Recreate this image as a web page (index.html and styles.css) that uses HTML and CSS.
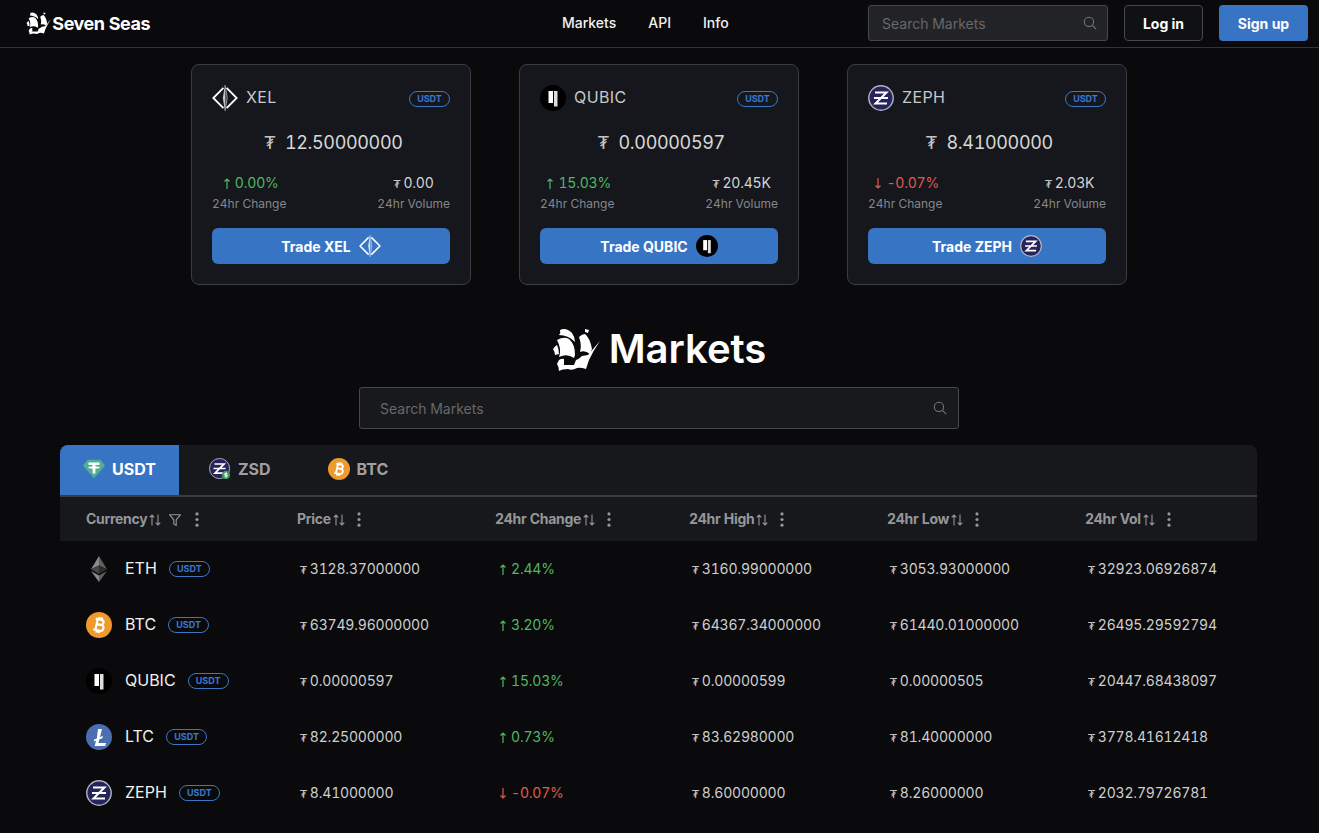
FILE: index.html
```html
<!DOCTYPE html>
<html lang="en">
<head>
  <meta charset="UTF-8">
  <title>Seven Seas - Markets</title>
  <link rel="stylesheet" href="styles.css">
</head>
<body>
  <svg class="sprite" xmlns="http://www.w3.org/2000/svg">
    <symbol id="i-ship" viewBox="0 0 48 44">
      <g fill="#fff">
        <path d="M8 3Q14 0 20 6Q23 10 23 15Q16 8 7 8Q9 6 8 3z"/>
        <path d="M5 13Q12 9 17 12Q23 17 23 28L22 31Q15 26 7 30Q10 22 5 13z"/>
        <path d="M1 22Q3 19 5 18Q7 22 7 27L3 28Q3 25 1 22z"/>
        <path d="M27 10Q30 7 33 7Q38 11 40 22L38 27Q33 23 28 25Q30 18 27 10z"/>
        <path d="M33 2L37 3L36 6L33 5z"/>
        <path d="M7 33Q10 31 12 32L12 38L5 37z"/>
        <path d="M5 37Q9 36 12 38L22 38L24 33Q27 32 30 29L36 28L48 14Q41 24 37 33L34 42Q28 40 25 41Q20 44 16 42Q10 42 7 44Q7 40 5 37z"/>
      </g>
    </symbol>
    <symbol id="i-xel" viewBox="0 0 26 26">
      <path fill="none" stroke="#fff" stroke-width="1.8" d="M11.4 2.8L1.3 13l10.1 10.2M14.6 2.8L24.700 13 14.600 23.200"/>
      <path fill="#fff" opacity=".75" d="M13 0l.5 13-.5 13-2.200-13z"/>
      <path fill="none" stroke="#fff" stroke-width=".6" d="M13 0l2.200 13L13 26"/>
    </symbol>
    <symbol id="i-qubic" viewBox="0 0 26 26">
      <circle cx="13" cy="13" r="13" fill="#000"/>
      <path fill="#fff" d="M8.500 6H13v12H8.500z"/>
      <path fill="#ddd" d="M14 6h3.500v15.500H14z"/>
    </symbol>
    <symbol id="i-zeph" viewBox="0 0 26 26">
      <circle cx="13" cy="13" r="12.200" fill="#25255c" stroke="#b4b4c6" stroke-width="1.400"/>
      <path fill="none" stroke="#fff" stroke-width="2" d="M7 7.500h11.500L7.500 18.500H19M6 13h14"/>
    </symbol>
    <symbol id="i-eth" viewBox="0 0 26 26">
      <path fill="#8a8a8a" d="M13 0v9.500l-8 3.800z"/>
      <path fill="#5e5e5e" d="M13 0v9.500l8 3.800z"/>
      <path fill="#454545" d="M5 13.300l8-3.800v8.500z"/>
      <path fill="#2d2d2d" d="M21 13.300l-8-3.800v8.500z"/>
      <path fill="#8a8a8a" d="M5 15l8 11v-6.500z"/>
      <path fill="#5e5e5e" d="M21 15l-8 11v-6.500z"/>
    </symbol>
    <symbol id="i-btc" viewBox="0 0 26 26">
      <circle cx="13" cy="13" r="13" fill="#ef9a2c"/>
      <g transform="rotate(12 13 13)">
        <path fill="none" stroke="#fff" stroke-width="2.200" d="M8.500 7.500h6c3.200 0 3.200 5 0 5H10.500m0 0h5c3.400 0 3.400 6-.5 6H8.500M10.500 6.500v13M12 7.500V5m2.500 2.500V5M12 18.500V21m2.500-2.500V21"/>
      </g>
    </symbol>
    <symbol id="i-ltc" viewBox="0 0 26 26">
      <circle cx="13" cy="13" r="13" fill="#4a6eb0"/>
      <path fill="#fff" d="M12 5h4l-2 8 3-1-.6 2.300-3 1-1 3.700H20l-.8 3H8.700l1.400-5.500-2.400.9.500-2 2.600-1z"/>
    </symbol>
    <symbol id="i-usdt" viewBox="0 0 24 20">
      <path fill="#53ae94" d="M5 0h14l5 6.500L12 20 0 6.500z"/>
      <path fill="#fff" d="M6 3h12v2.600h-4.500v1.500c2.800.2 4.800.7 4.800 1.300s-2 1.100-4.800 1.300V15h-3V9.700C7.700 9.500 5.700 9 5.700 8.400s2-1.100 4.800-1.300V5.600H6z"/>
    </symbol>
    <symbol id="i-zsd" viewBox="0 0 24 24">
      <circle cx="11.500" cy="11.500" r="11" fill="#25255c" stroke="#b4b4c6" stroke-width="1"/>
      <path fill="none" stroke="#fff" stroke-width="1.800" d="M6 6.500h10.500L6.500 16.500H17M5 11.500h13"/>
      <circle cx="18.500" cy="18.500" r="4.500" fill="#3f9c5f"/>
      <path fill="none" stroke="#fff" stroke-width="1" d="M18.500 15.500v6M20 17h-2.500c-.8 0-.8 1.500 0 1.500h2c.8 0 .8 1.500 0 1.500H17"/>
    </symbol>
    <symbol id="i-search" viewBox="0 0 16 16">
      <circle cx="6.800" cy="6.800" r="5.300" fill="none" stroke="currentColor" stroke-width="1.200"/>
      <path stroke="currentColor" stroke-width="1.200" d="M10.800 10.800l4.200 4.200"/>
    </symbol>
    <symbol id="i-sort" viewBox="0 0 12 12">
      <path fill="none" stroke="currentColor" stroke-width="1.100" d="M3 11.500V1M.7 3.300L3 1l2.300 2.300M9 .5V11M6.700 8.700L9 11l2.300-2.300"/>
    </symbol>
    <symbol id="i-filter" viewBox="0 0 12 12">
      <path fill="none" stroke="currentColor" stroke-width="1.100" d="M.6.800h10.800L7.200 5.800v5.600L4.800 10V5.800z"/>
    </symbol>
    <symbol id="i-dots" viewBox="0 0 4 16">
      <circle cx="2" cy="2" r="1.700" fill="currentColor"/>
      <circle cx="2" cy="8" r="1.700" fill="currentColor"/>
      <circle cx="2" cy="14" r="1.700" fill="currentColor"/>
    </symbol>
    <symbol id="i-up" viewBox="0 0 6 11">
      <path fill="none" stroke="currentColor" stroke-width="1.200" d="M3 11V1M.5 3.500L3 1l2.500 2.500"/>
    </symbol>
    <symbol id="i-down" viewBox="0 0 6 11">
      <path fill="none" stroke="currentColor" stroke-width="1.200" d="M3 0v10M.5 7.500L3 10l2.500-2.500"/>
    </symbol>
  </svg>

  <header class="topbar">
    <a class="brand" href="#"><svg class="brand-icon"><use href="#i-ship"/></svg>Seven Seas</a>
    <nav class="nav">
      <a href="#">Markets</a>
      <a href="#">API</a>
      <a href="#">Info</a>
    </nav>
    <div class="topbar-right">
      <div class="search search-small">
        <span>Search Markets</span>
        <svg class="search-icon"><use href="#i-search"/></svg>
      </div>
      <button class="btn-outline">Log in</button>
      <button class="btn-primary">Sign up</button>
    </div>
  </header>

  <main>
    <section class="cards">
      <article class="card">
        <div class="card-head">
          <svg class="coin"><use href="#i-xel"/></svg>
          <span class="card-name">XEL</span>
          <span class="badge">USDT</span>
        </div>
        <div class="card-price"><span class="tug">₮</span>12.50000000</div>
        <div class="card-stats">
          <div class="stat"><div class="stat-val up"><svg class="arrow"><use href="#i-up"/></svg>0.00%</div><div class="stat-label">24hr Change</div></div>
          <div class="stat"><div class="stat-val"><span class="tug">₮</span>0.00</div><div class="stat-label">24hr Volume</div></div>
        </div>
        <button class="trade">Trade XEL <svg class="coin-small"><use href="#i-xel"/></svg></button>
      </article>
      <article class="card">
        <div class="card-head">
          <svg class="coin"><use href="#i-qubic"/></svg>
          <span class="card-name">QUBIC</span>
          <span class="badge">USDT</span>
        </div>
        <div class="card-price"><span class="tug">₮</span>0.00000597</div>
        <div class="card-stats">
          <div class="stat"><div class="stat-val up"><svg class="arrow"><use href="#i-up"/></svg>15.03%</div><div class="stat-label">24hr Change</div></div>
          <div class="stat"><div class="stat-val"><span class="tug">₮</span>20.45K</div><div class="stat-label">24hr Volume</div></div>
        </div>
        <button class="trade">Trade QUBIC <svg class="coin-small"><use href="#i-qubic"/></svg></button>
      </article>
      <article class="card">
        <div class="card-head">
          <svg class="coin"><use href="#i-zeph"/></svg>
          <span class="card-name">ZEPH</span>
          <span class="badge">USDT</span>
        </div>
        <div class="card-price"><span class="tug">₮</span>8.41000000</div>
        <div class="card-stats">
          <div class="stat"><div class="stat-val down"><svg class="arrow"><use href="#i-down"/></svg>-0.07%</div><div class="stat-label">24hr Change</div></div>
          <div class="stat"><div class="stat-val"><span class="tug">₮</span>2.03K</div><div class="stat-label">24hr Volume</div></div>
        </div>
        <button class="trade">Trade ZEPH <svg class="coin-small"><use href="#i-zeph"/></svg></button>
      </article>
    </section>

    <h1 class="title"><svg class="title-icon"><use href="#i-ship"/></svg>Markets</h1>

    <div class="search search-large">
      <span>Search Markets</span>
      <svg class="search-icon"><use href="#i-search"/></svg>
    </div>

    <section class="panel">
      <div class="tabs">
        <a class="tab tab-active" href="#"><svg class="tab-icon"><use href="#i-usdt"/></svg>USDT</a>
        <a class="tab" href="#"><svg class="tab-icon"><use href="#i-zsd"/></svg>ZSD</a>
        <a class="tab" href="#"><svg class="tab-icon"><use href="#i-btc"/></svg>BTC</a>
      </div>
      <table class="markets">
        <colgroup>
          <col class="col-first">
          <col class="col-price">
          <col class="col-change">
          <col class="col-rest">
          <col class="col-rest">
          <col class="col-rest">
        </colgroup>
        <thead>
          <tr>
            <th>Currency<svg class="sort"><use href="#i-sort"/></svg><svg class="filter"><use href="#i-filter"/></svg><svg class="dots"><use href="#i-dots"/></svg></th>
            <th>Price<svg class="sort"><use href="#i-sort"/></svg><svg class="dots"><use href="#i-dots"/></svg></th>
            <th>24hr Change<svg class="sort"><use href="#i-sort"/></svg><svg class="dots"><use href="#i-dots"/></svg></th>
            <th>24hr High<svg class="sort"><use href="#i-sort"/></svg><svg class="dots"><use href="#i-dots"/></svg></th>
            <th>24hr Low<svg class="sort"><use href="#i-sort"/></svg><svg class="dots"><use href="#i-dots"/></svg></th>
            <th>24hr Vol<svg class="sort"><use href="#i-sort"/></svg><svg class="dots"><use href="#i-dots"/></svg></th>
          </tr>
        </thead>
        <tbody>
          <tr>
            <td><div class="pair"><svg class="coin"><use href="#i-eth"/></svg><span>ETH</span><span class="badge">USDT</span></div></td>
            <td><span class="tug">₮</span>3128.37000000</td>
            <td class="up"><svg class="arrow"><use href="#i-up"/></svg>2.44%</td>
            <td><span class="tug">₮</span>3160.99000000</td>
            <td><span class="tug">₮</span>3053.93000000</td>
            <td><span class="tug">₮</span>32923.06926874</td>
          </tr>
          <tr>
            <td><div class="pair"><svg class="coin"><use href="#i-btc"/></svg><span>BTC</span><span class="badge">USDT</span></div></td>
            <td><span class="tug">₮</span>63749.96000000</td>
            <td class="up"><svg class="arrow"><use href="#i-up"/></svg>3.20%</td>
            <td><span class="tug">₮</span>64367.34000000</td>
            <td><span class="tug">₮</span>61440.01000000</td>
            <td><span class="tug">₮</span>26495.29592794</td>
          </tr>
          <tr>
            <td><div class="pair"><svg class="coin"><use href="#i-qubic"/></svg><span>QUBIC</span><span class="badge">USDT</span></div></td>
            <td><span class="tug">₮</span>0.00000597</td>
            <td class="up"><svg class="arrow"><use href="#i-up"/></svg>15.03%</td>
            <td><span class="tug">₮</span>0.00000599</td>
            <td><span class="tug">₮</span>0.00000505</td>
            <td><span class="tug">₮</span>20447.68438097</td>
          </tr>
          <tr>
            <td><div class="pair"><svg class="coin"><use href="#i-ltc"/></svg><span>LTC</span><span class="badge">USDT</span></div></td>
            <td><span class="tug">₮</span>82.25000000</td>
            <td class="up"><svg class="arrow"><use href="#i-up"/></svg>0.73%</td>
            <td><span class="tug">₮</span>83.62980000</td>
            <td><span class="tug">₮</span>81.40000000</td>
            <td><span class="tug">₮</span>3778.41612418</td>
          </tr>
          <tr>
            <td><div class="pair"><svg class="coin"><use href="#i-zeph"/></svg><span>ZEPH</span><span class="badge">USDT</span></div></td>
            <td><span class="tug">₮</span>8.41000000</td>
            <td class="down"><svg class="arrow"><use href="#i-down"/></svg>-0.07%</td>
            <td><span class="tug">₮</span>8.60000000</td>
            <td><span class="tug">₮</span>8.26000000</td>
            <td><span class="tug">₮</span>2032.79726781</td>
          </tr>
        </tbody>
      </table>
    </section>
  </main>
</body>
</html>
```

FILE: styles.css
```css
* {
  box-sizing: border-box;
}
body {
  margin: 0;
  font-family: Inter, "Noto Sans", sans-serif;
  font-variant-numeric: tabular-nums;
  background: #0a0a0c;
  color: #d4d4d4;
}
a {
  color: inherit;
  text-decoration: none;
}
button {
  font-family: inherit;
  cursor: pointer;
}
.sprite {
  display: none;
}
main {
  padding-right: 1px;
}

/* top bar */
.topbar {
  display: flex;
  align-items: center;
  height: 48px;
  padding: 0 11px 1px 26px;
  border-bottom: 1px solid #333436;
}
.brand {
  display: flex;
  align-items: center;
  width: 124px;
  font-size: 18px;
  font-weight: 700;
  letter-spacing: -0.5px;
  white-space: nowrap;
  color: #fff;
}
.brand-icon {
  width: 26px;
  height: 24px;
  margin-right: 1px;
}
.nav {
  display: flex;
  gap: 32px;
  margin-left: 412px;
  padding-bottom: 2px;
  font-size: 14px;
  font-weight: 500;
  color: #f2f2f2;
}
.topbar-right {
  display: flex;
  gap: 16px;
  margin-left: auto;
}
.search {
  display: flex;
  align-items: center;
  justify-content: space-between;
  border: 1px solid #45474a;
  border-radius: 3px;
  color: #66686b;
  font-size: 14px;
}
.search-small {
  width: 240px;
  height: 36px;
  padding: 0 10px 0 13px;
  background: #212327;
}
.search-large {
  width: 600px;
  height: 42px;
  margin: 0 auto 16px;
  padding: 0 11px 0 20px;
  background: #17191d;
}
.search-icon {
  width: 14px;
  height: 14px;
  color: #77797c;
}
.btn-outline,
.btn-primary {
  height: 36px;
  border-radius: 4px;
  font-size: 14px;
  font-weight: 700;
  color: #fff;
}
.btn-outline {
  width: 79px;
  background: #101114;
  border: 1px solid #46484b;
}
.btn-primary {
  width: 89px;
  background: #3874c4;
  border: 0;
}

/* coin cards */
.cards {
  display: flex;
  justify-content: center;
  gap: 48px;
  padding-top: 16px;
}
.card {
  width: 280px;
  height: 221px;
  padding: 20px;
  background: #15171c;
  border: 1px solid #3a3c40;
  border-radius: 8px;
}
.card-head {
  display: flex;
  align-items: center;
  height: 26px;
}
.coin {
  width: 26px;
  height: 26px;
  flex: none;
}
.card-name {
  margin-left: 8px;
  padding-bottom: 2px;
  font-size: 16px;
  letter-spacing: 0.4px;
  color: #c8c8c8;
}
.badge {
  display: inline-block;
  width: 41px;
  height: 16px;
  border: 1px solid #3a78c4;
  border-radius: 8px;
  color: #3a78d4;
  font-size: 9px;
  font-weight: 700;
  line-height: 14px;
  text-align: center;
}
.card-head .badge {
  margin-left: auto;
  margin-top: 2px;
}
.card-price {
  margin-top: 20px;
  padding-left: 5px;
  font-size: 18px;
  line-height: 24px;
  letter-spacing: -0.35px;
  text-align: center;
  color: #d8d8d8;
}
.card-price .tug {
  margin-right: 10px;
  font-size: 17px;
}
.card-stats {
  display: flex;
  justify-content: space-between;
  margin-top: 18px;
}
.stat {
  text-align: center;
}
.stat-val {
  font-size: 14px;
  line-height: 20px;
  letter-spacing: -0.2px;
}
.stat-val .arrow {
  margin-left: 4px;
}
.stat-label {
  margin-top: 2px;
  font-size: 12px;
  line-height: 18px;
  color: #858689;
}
.trade {
  display: flex;
  align-items: center;
  justify-content: center;
  gap: 8px;
  width: 100%;
  height: 36px;
  margin-top: 15px;
  background: #3874c4;
  border: 0;
  border-radius: 6px;
  color: #fff;
  font-size: 14px;
  font-weight: 700;
}
.coin-small {
  width: 22px;
  height: 22px;
}
.up {
  color: #4fb765;
}
.down {
  color: #e05a4e;
}
.arrow {
  width: 6px;
  height: 11px;
  margin: 0 5px 0 2px;
  vertical-align: -1px;
}
.tug {
  margin-right: 3px;
  font-family: "DejaVu Sans", sans-serif;
  font-size: 11px;
  line-height: 0;
  color: #c4c4c4;
}

/* markets heading */
.title {
  display: flex;
  align-items: center;
  justify-content: center;
  gap: 9px;
  height: 47px;
  margin: 40px 0 15px;
  font-size: 40px;
  font-weight: 600;
  color: #fff;
}
.title-icon {
  width: 48px;
  height: 44px;
}

/* market table */
.panel {
  margin: 0 61px 0 60px;
}
.tabs {
  display: flex;
  height: 52px;
  background: #16181c;
  border-bottom: 2px solid #3a3c40;
  border-radius: 8px 8px 0 0;
}
.tab {
  display: flex;
  align-items: center;
  gap: 7px;
  height: 50px;
  padding: 0 27px 2px 30px;
  font-size: 16px;
  font-weight: 700;
  color: #a0a0a2;
}
.tab-active {
  padding: 0 23px 2px;
  background: #3874c4;
  border-radius: 8px 0 0 0;
  color: #fff;
}
.tab-icon {
  width: 22px;
  height: 22px;
}
.markets {
  width: 100%;
  border-collapse: collapse;
  table-layout: fixed;
}
.col-first {
  width: 211px;
}
.col-price {
  width: 198px;
}
.col-change {
  width: 194px;
}
.col-rest {
  width: 198px;
}
th {
  height: 44px;
  padding: 0 0 2px 26px;
  background: #16181c;
  color: #95969a;
  font-size: 14px;
  font-weight: 700;
  letter-spacing: -0.3px;
  text-align: left;
  white-space: nowrap;
}
th svg {
  vertical-align: -2px;
}
.sort {
  width: 12px;
  height: 12px;
  margin-left: 2px;
}
.filter {
  width: 12px;
  height: 12px;
  margin-left: 8px;
}
.dots {
  width: 4px;
  height: 15px;
  margin-left: 12px;
  vertical-align: -3px;
}
.filter + .dots {
  margin-left: 14px;
}
td {
  height: 56px;
  padding: 0 0 2px 29px;
  font-size: 14px;
  letter-spacing: -0.2px;
  white-space: nowrap;
  color: #cfcfcf;
}
td.up {
  color: #4fb765;
}
td.down {
  color: #e05a4e;
}
td:first-child {
  padding: 0 0 0 26px;
  letter-spacing: 0;
}
.pair {
  display: flex;
  align-items: center;
  font-size: 16px;
  color: #f0f0f0;
}
.pair .coin + span {
  margin: 0 12px 0 13px;
  padding-bottom: 2px;
}
```
